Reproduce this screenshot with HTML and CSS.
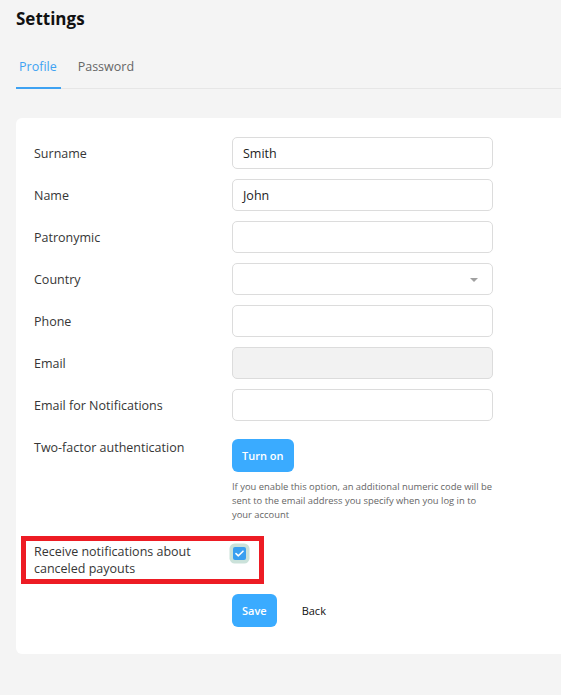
FILE: index.html
```html
<!DOCTYPE html>
<html lang="en">
<head>
<meta charset="utf-8">
<title>Settings</title>
<link rel="stylesheet" href="styles.css">
</head>
<body>
<div class="page">
  <h1 class="title">Settings</h1>
  <nav class="tabs">
    <a class="tab active">Profile</a>
    <a class="tab">Password</a>
  </nav>
  <section class="card">
    <div class="row">
      <label class="label">Surname</label>
      <div class="input">Smith</div>
    </div>
    <div class="row">
      <label class="label">Name</label>
      <div class="input">John</div>
    </div>
    <div class="row">
      <label class="label">Patronymic</label>
      <div class="input"></div>
    </div>
    <div class="row">
      <label class="label">Country</label>
      <div class="input select"><span class="caret"></span></div>
    </div>
    <div class="row">
      <label class="label">Phone</label>
      <div class="input"></div>
    </div>
    <div class="row">
      <label class="label">Email</label>
      <div class="input disabled"></div>
    </div>
    <div class="row">
      <label class="label">Email for Notifications</label>
      <div class="input"></div>
    </div>
    <div class="row row-2fa">
      <label class="label label-top">Two-factor authentication</label>
      <div class="field">
        <button class="btn btn-primary">Turn on</button>
        <p class="help">If you enable this option, an additional numeric code will be sent to the email address you specify when you log in to your account</p>
      </div>
    </div>
    <div class="row row-notify">
      <label class="label label-multi">Receive notifications about canceled payouts</label>
      <div class="field">
        <span class="checkbox"><svg width="9" height="7" viewBox="0 0 9 7"><path d="M1 3.6 L3.4 5.8 L8 1.2" fill="none" stroke="#fff" stroke-width="1.6" stroke-linecap="round" stroke-linejoin="round"/></svg></span>
      </div>
    </div>
    <div class="row row-actions">
      <span></span>
      <div class="actions">
        <button class="btn btn-primary">Save</button>
        <button class="btn btn-link">Back</button>
      </div>
    </div>
  </section>
</div>
</body>
</html>
```
FILE: styles.css
```css
html, body {
  margin: 0;
  padding: 0;
  background: #f4f4f4;
}
body {
  font-family: "Open Sans", "Noto Sans", sans-serif;
  color: #444;
  overflow: hidden;
}
.page {
  padding: 7px 0 0 16px;
}
.title {
  margin: 0;
  font-size: 17px;
  line-height: 24px;
  font-weight: 700;
  color: #111;
}
.tabs {
  display: flex;
  margin-top: 17px;
  border-bottom: 1px solid #e6e6e6;
}
.tab {
  font-size: 12.5px;
  line-height: 18px;
  padding: 10px 4px 11px 3px;
  margin-right: 14px;
  color: #666;
  font-weight: 500;
  margin-bottom: -1px;
  border-bottom: 2px solid transparent;
}
.tab.active {
  color: #3ea2f2;
  border-bottom-color: #3ea2f2;
}
.card {
  margin-top: 29px;
  background: #fff;
  border-radius: 6px 0 0 6px;
  padding: 19px 0 27px 18px;
}
.row {
  display: grid;
  grid-template-columns: 198px 261px;
  align-items: start;
  margin-bottom: 10px;
  position: relative;
}
.label {
  font-size: 12.5px;
  line-height: 18px;
  padding-top: 7.5px;
  color: #363636;
}
.label-top {
  padding-top: 0;
}
.input {
  height: 32px;
  box-sizing: border-box;
  border: 1px solid #dcdcdc;
  border-radius: 5px;
  background: #fff;
  padding: 0 10px;
  font-size: 12.5px;
  line-height: 31px;
  color: #222;
  position: relative;
}
.input.disabled {
  background: #f2f2f2;
}
.caret {
  position: absolute;
  right: 14px;
  top: 14px;
  width: 0;
  height: 0;
  border-left: 4px solid transparent;
  border-right: 4px solid transparent;
  border-top: 4px solid #a0a0a0;
}
.row-2fa {
  margin-top: 18px;
}
.btn {
  font-family: inherit;
  border: none;
  cursor: pointer;
  height: 33px;
  border-radius: 6px;
  font-size: 11px;
  font-weight: 600;
  padding: 0 10px;
}
.btn-primary {
  background: #3aabff;
  color: #fff;
}
.btn-link {
  background: transparent;
  color: #111;
  font-weight: 500;
}
.field {
  display: flex;
  flex-direction: column;
  align-items: flex-start;
}
.help {
  margin: 8px 0 0 0;
  font-size: 9.4px;
  line-height: 14px;
  color: #666;
}
.row-notify {
  margin-top: 21px;
  margin-bottom: 17px;
}
.row-notify::before {
  content: "";
  position: absolute;
  left: -13px;
  top: -7px;
  width: 233px;
  height: 38px;
  border: 5px solid #ed1c24;
  pointer-events: none;
}
.label-multi {
  padding-top: 0;
  line-height: 17px;
}
.checkbox {
  margin: 4px 0 0 1px;
  width: 13px;
  height: 13px;
  border-radius: 2px;
  background: #3a9ff0;
  box-shadow: 0 0 0 3.5px #cbe2da;
  display: flex;
  align-items: center;
  justify-content: center;
}
.actions {
  display: flex;
  gap: 15px;
}
.row-actions {
  margin-bottom: 0;
}
```
